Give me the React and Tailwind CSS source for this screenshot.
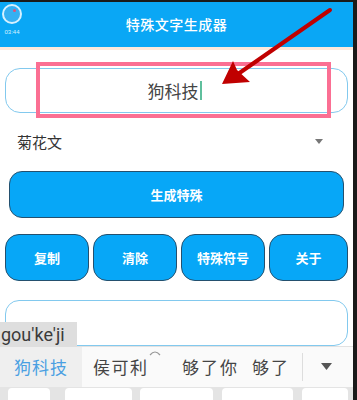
import React from "react";

const cjk = { fontFamily: '"Noto Sans CJK SC", "Noto Sans", sans-serif' };

export default function App() {
  return (
    <div className="relative w-[357px] h-[400px] overflow-hidden flex bg-white" style={cjk}>
      <div className="w-[353px] h-full flex flex-col">
        <div className="h-[2px] bg-[#1a1a1a]" />
        <div className="relative h-[46px] bg-[#0aa7f5] flex items-center justify-center">
          <div className="absolute left-[2px] top-[2px] flex flex-col items-center">
            <div className="w-[20px] h-[20px] rounded-full border-2 border-[#d6f1ff] bg-[#35b0f2] relative">
              <div className="absolute left-[9px] top-[3px] w-[3px] h-[3px] rounded-full bg-[#e0507a]" />
            </div>
            <div className="text-[6px] leading-none mt-[5px] text-[#d8f2ff] font-['Liberation_Sans']">03:44</div>
          </div>
          <span className="text-[14px] text-white font-medium tracking-[0.5px]">特殊文字生成器</span>
        </div>
        <div className="h-[3px] bg-[#fde9dc]" />
        <div className="flex flex-col px-[5px]">
          <div className="mt-[18px] h-[45px] rounded-[15px] border border-[#82c9ee] flex items-center justify-center">
            <span className="text-[17px] text-[#444] ml-[-4px]">狗科技</span>
            <span className="w-[2px] h-[19px] bg-[#5fbf9d] ml-[1px]" />
          </div>
          <div className="h-[58px] flex items-center justify-between pl-[12px] pr-[25px]">
            <span className="text-[15px] text-[#333]">菊花文</span>
            <svg width="8" height="5" viewBox="0 0 8 5"><path d="M0 0h8L4 5z" fill="#777" /></svg>
          </div>
          <div className="mx-[4px] h-[47px] rounded-[13px] bg-[#07a7f7] border border-[#24506e] flex items-center justify-center">
            <span className="text-[13px] text-white font-bold">生成特殊</span>
          </div>
          <div className="mt-[16px] flex gap-[4px] h-[47px]">
            {["复制", "清除", "特殊符号"].map((t) => (
              <div key={t} className="w-[84px] rounded-[14px] bg-[#07a7f7] border border-[#24506e] flex items-center justify-center">
                <span className="text-[13px] text-white font-bold">{t}</span>
              </div>
            ))}
            <div className="flex-1 rounded-[14px] bg-[#07a7f7] border border-[#24506e] flex items-center justify-center">
              <span className="text-[13px] text-white font-bold">关于</span>
            </div>
          </div>
          <div className="mt-[19px] h-[46px] rounded-[14px] border border-[#82c9ee]" />
        </div>
        <div className="h-[42px] border-t border-[#e2e2e2] bg-[#fafafa] flex items-center">
          <div className="w-[82px] h-full bg-[#efefef] flex items-center justify-center">
            <span className="text-[17px] tracking-[1px] text-[#4a9fe2]">狗科技</span>
          </div>
          <div className="relative ml-[11px] w-[89px]">
            <span className="text-[17px] tracking-[1.5px] text-[#444]">侯可利</span>
            <svg className="absolute left-[56px] top-[-5px]" width="12" height="7" viewBox="0 0 12 7">
              <path d="M1 6 Q6 0 11 6" fill="none" stroke="#999" strokeWidth="1.2" />
            </svg>
          </div>
          <span className="w-[70px] text-[17px] tracking-[2px] text-[#444]">够了你</span>
          <span className="w-[50px] text-[17px] tracking-[2px] text-[#444]">够了</span>
          <div className="w-px h-[28px] bg-[#ddd]" />
          <svg className="ml-[18px]" width="11" height="7" viewBox="0 0 11 7"><path d="M0 0h11L5.5 7z" fill="#555" /></svg>
        </div>
        <div className="flex-1 bg-[#e4e4e4] flex items-start pt-[1px] pl-[8px]">
          <div className="w-[42px] h-[12px] bg-white rounded-t-[4px]" />
          <div className="ml-[15px] w-[67px] h-[12px] bg-white rounded-t-[4px]" />
          <div className="ml-[8px] w-[73px] h-[12px] bg-white rounded-t-[4px]" />
          <div className="ml-[9px] w-[71px] h-[12px] bg-white rounded-t-[4px]" />
          <div className="ml-[9px] w-[46px] h-[12px] bg-white rounded-t-[4px]" />
        </div>
      </div>
      <div className="w-[4px] h-full bg-[#1a1a1a]" />

      {/* pink highlight */}
      <div className="absolute left-[36px] top-[62px] w-[295px] h-[56px] border-[4px] border-[#fb6f93]" />
      {/* arrow */}
      <svg className="absolute left-0 top-0" width="357" height="400" viewBox="0 0 357 400">
        <line x1="330" y1="10" x2="238" y2="74" stroke="#c00000" strokeWidth="4" strokeLinecap="round" />
        <path d="M222 84 L233 61 L237 70 L250 82 Z" fill="#c00000" />
      </svg>
      {/* pinyin composing */}
      <div className="absolute left-0 top-[322px] w-[77px] h-[25px] bg-[#dedede] flex items-center pl-[1px]">
        <span className="text-[18px] leading-none text-[#3a3a3a] font-['Roboto']">gou'ke'ji</span>
      </div>
    </div>
  );
}
